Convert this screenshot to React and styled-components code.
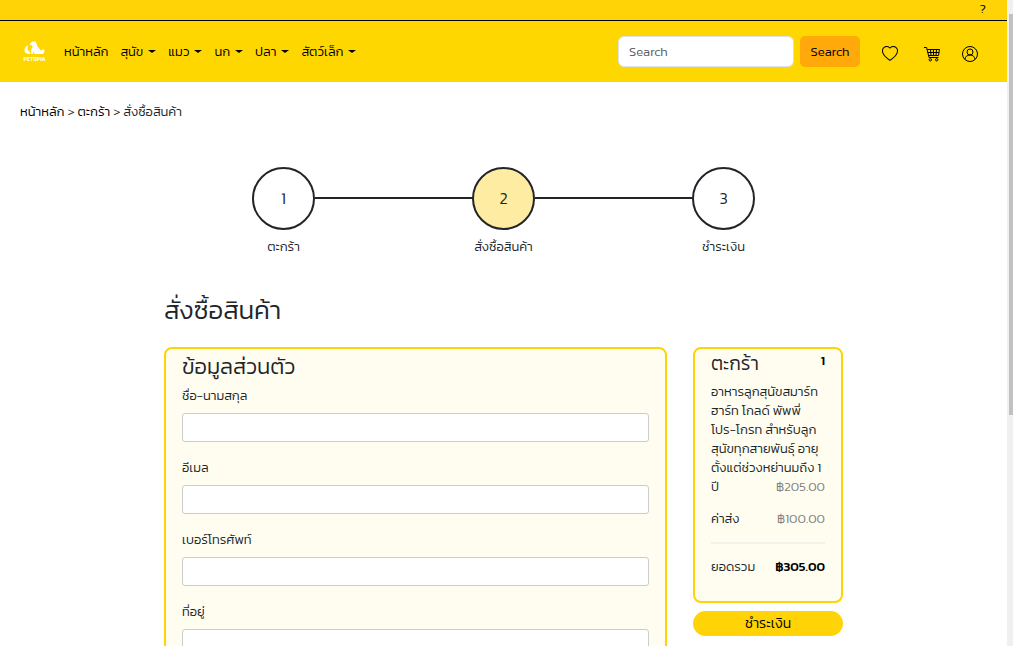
import React from "react";
import styled, { createGlobalStyle, css } from "styled-components";

const GlobalStyle = createGlobalStyle`
  *, *::before, *::after { box-sizing: border-box; }
  body {
    margin: 0;
    background: #fff;
    color: #212529;
    font-family: "Kanit", "Noto Sans Thai", "Open Sans", "Noto Sans", sans-serif;
    font-size: 13px;
    font-weight: 300;
    line-height: 19px;
  }
  h1, h2, p, ul, ol { margin: 0; padding: 0; font-weight: 300; }
  ul, ol { list-style: none; }
  a { color: inherit; text-decoration: none; }
  input, button { font: inherit; color: inherit; }
`;

const Shell = styled.div`
  height: 100vh;
  display: flex;
  overflow: hidden;
`;
const Page = styled.div`
  flex: 1;
  min-width: 0;
`;
const ScrollTrack = styled.div`
  flex: none;
  width: 6px;
  padding: 14px 0 0 2px;
  background: #f0f0f0;
`;
const ScrollThumb = styled.div`
  height: 401px;
  background: #c1c1c1;
`;

const TopBar = styled.div`
  display: flex;
  justify-content: flex-end;
  height: 21px;
  padding: 0 21px;
  background: #ffd305;
  border-bottom: 1px solid #000;
  color: #000;
  line-height: 17px;
`;
const Nav = styled.nav`
  display: flex;
  align-items: center;
  height: 61px;
  padding: 0 29px 0 20px;
  background: #ffd700;
  color: #000;
`;
const Logo = styled.a`
  display: flex;
  width: 28px;
  margin-right: 16px;
`;
const Menu = styled.ul`
  display: flex;
  flex: 1;
  gap: 12px;
  white-space: nowrap;
`;
const MenuLink = styled.a`
  display: flex;
  align-items: center;
  gap: 5px;
  ${(p) => p.$drop && css`
    &::after {
      content: "";
      border: 4px solid transparent;
      border-top: 3px solid currentColor;
      border-bottom: 0;
    }
  `}
`;
const SearchForm = styled.form`
  display: flex;
  gap: 6px;
`;
const SearchInput = styled.input`
  width: 176px;
  height: 31px;
  padding: 0 10px;
  border: 1px solid #dee2e6;
  border-radius: 6px;
  background: #fff;
  &::placeholder { color: #595c5f; opacity: 1; }
`;
const SearchButton = styled.button`
  width: 60px;
  padding: 0;
  border: 0;
  border-radius: 5px;
  background: #ffa90a;
`;
const Actions = styled.div`
  display: flex;
  align-items: center;
  padding: 4px 0 0 22px;
`;
const ActionLink = styled.a`
  display: flex;
  & + & { margin-left: 26px; }
  & + & + & { margin-left: 22px; }
`;

const Crumbs = styled.nav`
  padding: 20px 20px 0;
  a { color: #000; }
`;

const Steps = styled.ol`
  display: flex;
  justify-content: center;
  padding-top: 46px;
`;
const Step = styled.li`
  position: relative;
  display: flex;
  flex-direction: column;
  align-items: center;
  gap: 7px;
  width: 220px;
  & + &::before {
    content: "";
    position: absolute;
    top: 30px;
    right: calc(50% + 31px);
    width: calc(100% - 62px);
    height: 2px;
    background: #212529;
  }
`;
const StepCircle = styled.span`
  display: flex;
  align-items: center;
  justify-content: center;
  width: 63px;
  height: 63px;
  border: 2px solid #212529;
  border-radius: 50%;
  background: ${(p) => (p.$active ? "#fdeca2" : "#fff")};
  font-size: 16px;
`;

const Main = styled.main`
  padding: 38px 164px 0;
`;
const Title = styled.h1`
  font-size: 26px;
  line-height: 32px;
`;
const Columns = styled.div`
  display: grid;
  grid-template-columns: minmax(0, 1fr) 150px;
  align-items: start;
  gap: 26px;
  padding-top: 21px;
`;
const Card = styled.section`
  border: 2px solid #ffd305;
  border-radius: 8px;
  background: #fffdf0;
  padding: ${(p) => p.$pad};
`;
const CardTitle = styled.h2`
  font-size: ${(p) => (p.$small ? "19px" : "22px")};
  line-height: 28px;
`;
const Field = styled.label`
  display: block;
  padding: 5px 0 11px;
`;
const TextInput = styled.input`
  display: block;
  width: 100%;
  height: 29px;
  margin-top: 8px;
  padding: 0 8px;
  border: 1px solid #ccc;
  border-radius: 3px;
  background: #fff;
`;
const CartHead = styled.header`
  display: flex;
  justify-content: space-between;
`;
const Count = styled.b`
  color: #000;
  font-weight: 500;
  line-height: 21px;
`;
const Item = styled.p`
  padding-top: 4px;
  white-space: nowrap;
`;
const Row = styled.p`
  display: flex;
  justify-content: space-between;
  padding-top: ${(p) => p.$top || "0"};
`;
const Price = styled.span`
  color: #808080;
`;
const Total = styled.b`
  color: #000;
  font-weight: 500;
`;
const Rule = styled.hr`
  height: 2px;
  margin: 14px 0 0;
  border: 0;
  background: #f2f2ea;
`;
const PayButton = styled.button`
  width: 100%;
  height: 25px;
  margin-top: 8px;
  padding: 0;
  border: 0;
  border-radius: 13px;
  background: #ffd305;
  color: #000;
  font-size: 14px;
`;

const PetLogo = () => (
  <svg width="28" height="28" viewBox="0 0 28 28" fill="#fff" aria-hidden="true">
    <path d="M10 5.6 12.2 3.5 15.4 3.6 16.6 5.5 17.2 8 20.6 12.2 22 12.4 22.4 11.2 24.2 11.6 24.4 14.4 22.6 16 14.6 16 13.6 13 12.8 16 11 16 11.2 11.6 12.6 8.4 12 7.2 10 7Z" />
    <path d="M8.4 7.6C5.4 8 4.4 10.4 4.6 13 4.8 15 6.2 16 10.4 16L9.6 13.4C8.4 12.8 7.4 11.6 7.4 10.2Z" />
    <text x="14.5" y="23" textAnchor="middle" fontFamily="'Liberation Sans Narrow', 'Roboto Condensed', Roboto, sans-serif" fontWeight="700" fontSize="6">PETOPIA</text>
  </svg>
);
const HeartIcon = () => (
  <svg width="16" height="16" viewBox="0 0 16 16" fill="currentColor" aria-hidden="true">
    <path d="m8 2.748-.717-.737C5.6.281 2.514.878 1.4 3.053c-.523 1.023-.641 2.5.314 4.385.92 1.815 2.834 3.989 6.286 6.357 3.452-2.368 5.365-4.542 6.286-6.357.955-1.886.838-3.362.314-4.385C13.486.878 10.4.28 8.717 2.01zM8 15C-7.333 4.868 3.279-3.04 7.824 1.143q.09.083.176.171a3 3 0 0 1 .176-.17C12.72-3.042 23.333 4.867 8 15" />
  </svg>
);
const CartIcon = () => (
  <svg width="16" height="16" viewBox="0 0 16 16" fill="none" stroke="currentColor" aria-hidden="true">
    <path d="M0 1.5H2.6L5 11.5H14.5M3.2 3.5H15.5L14.5 9.5H4.5M3.8 6.5H15M6.5 3.5 7 9.5M9.5 3.5V9.5M12.5 3.5 12 9.5" />
    <circle cx="6.3" cy="13.8" r="1.2" />
    <circle cx="12.7" cy="13.8" r="1.2" />
  </svg>
);
const UserIcon = () => (
  <svg width="16" height="16" viewBox="0 0 16 16" fill="none" stroke="currentColor" aria-hidden="true">
    <circle cx="8" cy="8" r="7.5" />
    <circle cx="8" cy="6" r="3" />
    <path d="M3 13.4C3.2 10.6 5.2 9 8 9S12.8 10.6 13 13.4" />
  </svg>
);

const MENU = [
  ["หน้าหลัก", false],
  ["สุนัข", true],
  ["แมว", true],
  ["นก", true],
  ["ปลา", true],
  ["สัตว์เล็ก", true],
];
const STEPS = ["ตะกร้า", "สั่งซื้อสินค้า", "ชำระเงิน"];
const FIELDS = [
  ["name", "ชื่อ-นามสกุล"],
  ["email", "อีเมล"],
  ["phone", "เบอร์โทรศัพท์"],
  ["address", "ที่อยู่"],
];
const ITEM_LINES = [
  "อาหารลูกสุนัขสมาร์ท",
  "ฮาร์ท โกลด์ พัพพี่",
  "โปร-โกรท สำหรับลูก",
  "สุนัขทุกสายพันธุ์ อายุ",
  "ตั้งแต่ช่วงหย่านมถึง 1",
];

export default function App() {
  return (
    <Shell>
      <GlobalStyle />
      <Page>
        <TopBar><a href="#help">?</a></TopBar>
        <Nav>
          <Logo href="#home" aria-label="Petopia"><PetLogo /></Logo>
          <Menu>
            {MENU.map(([label, drop]) => (
              <li key={label}><MenuLink href="#menu" $drop={drop}>{label}</MenuLink></li>
            ))}
          </Menu>
          <SearchForm>
            <SearchInput type="search" placeholder="Search" aria-label="Search" />
            <SearchButton type="button">Search</SearchButton>
          </SearchForm>
          <Actions>
            <ActionLink href="#favourites" aria-label="Favourites"><HeartIcon /></ActionLink>
            <ActionLink href="#cart" aria-label="Cart"><CartIcon /></ActionLink>
            <ActionLink href="#account" aria-label="Account"><UserIcon /></ActionLink>
          </Actions>
        </Nav>
        <Crumbs><a href="#home">หน้าหลัก</a> &gt; <a href="#cart">ตะกร้า</a> &gt; สั่งซื้อสินค้า</Crumbs>
        <Steps>
          {STEPS.map((s, i) => (
            <Step key={s}><StepCircle $active={i === 1}>{i + 1}</StepCircle>{s}</Step>
          ))}
        </Steps>
        <Main>
          <Title>สั่งซื้อสินค้า</Title>
          <Columns>
            <Card $pad="4px 16px 16px">
              <CardTitle>ข้อมูลส่วนตัว</CardTitle>
              {FIELDS.map(([id, label]) => (
                <Field key={id}>{label}<TextInput name={id} /></Field>
              ))}
            </Card>
            <div>
              <Card $pad="1px 16px 25px">
                <CartHead><CardTitle $small>ตะกร้า</CardTitle><Count>1</Count></CartHead>
                <Item>{ITEM_LINES.map((l) => <React.Fragment key={l}>{l}<br /></React.Fragment>)}</Item>
                <Row><span>ปี</span><Price>฿205.00</Price></Row>
                <Row $top="13px"><span>ค่าส่ง</span><Price>฿100.00</Price></Row>
                <Rule />
                <Row $top="13px"><span>ยอดรวม</span><Total>฿305.00</Total></Row>
              </Card>
              <PayButton type="button">ชำระเงิน</PayButton>
            </div>
          </Columns>
        </Main>
      </Page>
      <ScrollTrack aria-hidden="true"><ScrollThumb /></ScrollTrack>
    </Shell>
  );
}
